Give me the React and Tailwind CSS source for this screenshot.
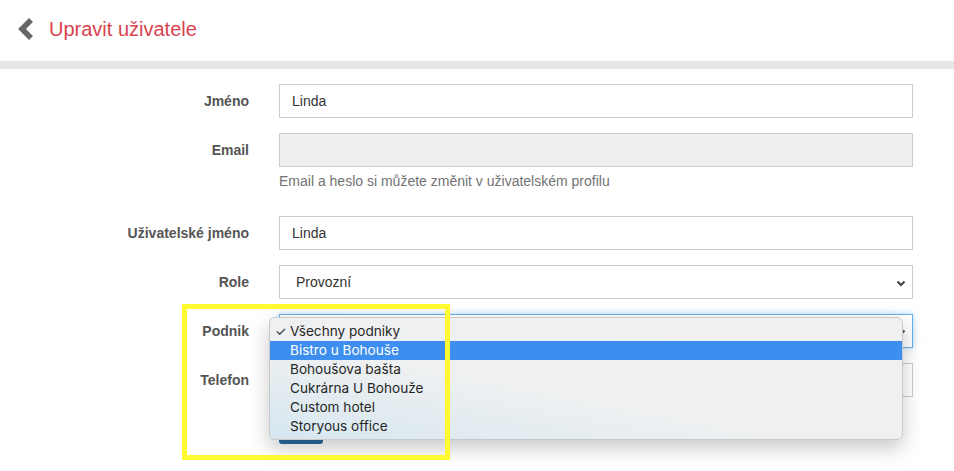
import React from "react";

// Form data
const podniky = [
  "Všechny podniky",
  "Bistro u Bohouše",
  "Bohoušova bašta",
  "Cukrárna U Bohouže",
  "Custom hotel",
  "Storyous office",
];

const Chevron = () => (
  <svg width="10" height="7" viewBox="0 0 10 7" className="absolute right-[6px] top-[14px]">
    <polyline points="1.5,1.5 5,5 8.5,1.5" fill="none" stroke="#444" strokeWidth="2" />
  </svg>
);

const Row = ({ label, children, className = "mb-[15px]" }) => (
  <div className={`flex ${className}`}>
    <label className="w-[249px] h-[34px] shrink-0 flex items-center justify-end text-[14px] font-bold text-[#555]">
      {label}
    </label>
    <div className="ml-[30px] w-[634px] relative">{children}</div>
  </div>
);

const Input = ({ value = "", disabled }) => (
  <div
    className={`h-[34px] border border-[#cccccc] flex items-center pl-[12px] text-[14px] text-[#333] ${
      disabled ? "bg-[#eeeeee]" : "bg-white"
    }`}
  >
    {value}
  </div>
);

export default function App() {
  return (
    <div className="relative w-[954px] h-[471px] overflow-hidden bg-white font-['Liberation_Sans',Arial,sans-serif]">
      {/* Header */}
      <header className="h-[61px] flex items-center pl-[16px] pb-[3px]">
        <svg width="18" height="24" viewBox="0 0 18 24">
          <polyline points="15,3 6,12 15,21" fill="none" stroke="#666" strokeWidth="5.5" />
        </svg>
        <h1 className="ml-[15px] text-[20px] text-[#d9434f] font-normal">Upravit uživatele</h1>
      </header>
      <div className="h-2 bg-[#e6e6e6]" />

      {/* Form */}
      <form className="pt-[15px]">
        <Row label="Jméno">
          <Input value="Linda" />
        </Row>
        <Row label="Email" className="mb-[26px]">
          <Input disabled />
          <p className="mt-[5px] h-[18px] leading-[18px] text-[14px] text-[#737373]">
            Email a heslo si můžete změnit v uživatelském profilu
          </p>
        </Row>
        <Row label="Uživatelské jméno">
          <Input value="Linda" />
        </Row>
        <Row label="Role">
          <div className="h-[34px] border border-[#cccccc] flex items-center pl-[16px] text-[14px] text-[#333] relative">
            Provozní
            <Chevron />
          </div>
        </Row>
        <Row label="Podnik">
          <div className="h-[34px] border border-[#66afe9] shadow-[0_0_6px_rgba(102,175,233,0.5)] relative">
            <Chevron />
          </div>
          {/* native select popup */}
          <div className="absolute left-[-10px] top-[3px] z-10 w-[634px] h-[123px] rounded-[6px] border border-[#c9c9c9] bg-[linear-gradient(to_top_right,#d6e7f0,#eef0f1_40%,#f0f0f0)] shadow-[0_8px_20px_rgba(0,0,0,0.22)] pt-[4px] font-['Inter','DejaVu_Sans',sans-serif] text-[13.6px] text-[#262626]">
            {podniky.map((p, i) => (
              <div
                key={p}
                className={`h-[19px] flex items-center relative pl-[20px] ${
                  i === 1 ? "bg-[#3d8fef] text-white" : ""
                }`}
              >
                {i === 0 && <span className="absolute left-[5px] text-[13px]">✓</span>}
                {p}
              </div>
            ))}
          </div>
        </Row>
        <Row label="Telefon">
          <Input />
        </Row>
        <div className="ml-[279px]">
          <button type="button" className="w-[44px] h-[32px] bg-[#2b6aa0] rounded-[3px]" />
        </div>
      </form>

      {/* annotation */}
      <div className="absolute left-[182px] top-[304px] w-[268px] h-[156px] border-[5px] border-[#fffb30] z-20" />
    </div>
  );
}
